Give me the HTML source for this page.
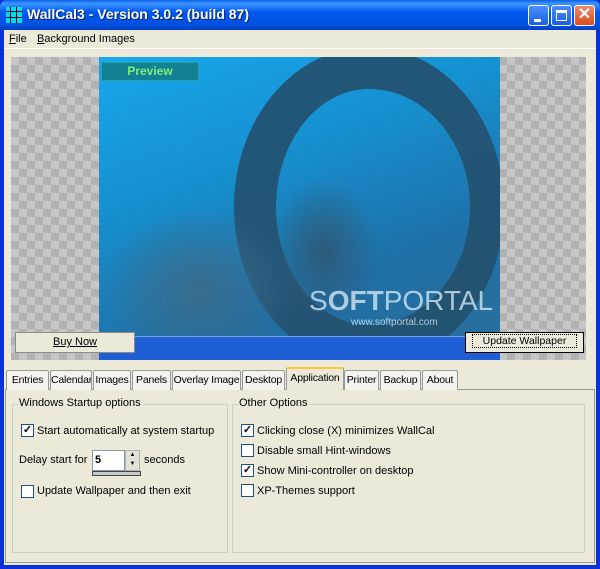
<!DOCTYPE html>
<html><head><style>
*{margin:0;padding:0;box-sizing:border-box}
body{width:600px;height:569px;overflow:hidden;background:#0831d9;font-family:"Liberation Sans",sans-serif;font-size:11px;color:#000;position:relative;white-space:nowrap}
.a{position:absolute}
#title{left:0;top:0;width:600px;height:30px;background:linear-gradient(#0a5fe8 0%,#3d95ff 12%,#0058ee 40%,#0050e0 85%,#003fbf 100%);border-radius:7px 7px 0 0}
#client{left:4px;top:30px;width:592px;height:535px;background:#ece9d8}
.cb{width:13px;height:13px;border:1px solid #1c5180;background:#fff;font-size:11px;line-height:11px;text-align:center;font-weight:bold}
.tab{top:370px;height:20px;border:1px solid #919b9c;border-bottom:none;background:#f4f3ee;line-height:18px;text-align:center;font-size:10.5px;letter-spacing:-0.2px;border-radius:2px 2px 0 0;overflow:hidden}
.gb{border:1px solid #d0d0bf;}
.lg{background:#ece9d8;padding:0 1px;font-size:11px}
</style></head><body>
<div id="title" class="a">
 <div class="a" style="left:6px;top:7px;width:16px;height:16px;background:
 linear-gradient(90deg,transparent 4px,#004 4px,#004 5px,transparent 5px,transparent 10px,#004 10px,#004 11px,transparent 11px),
 linear-gradient(transparent 4px,#004 4px,#004 5px,transparent 5px,transparent 10px,#004 10px,#004 11px,transparent 11px),#00e0e0"></div>
 <div class="a" style="left:27px;top:6px;color:#fff;font-weight:bold;font-size:14px;text-shadow:1px 1px #0a246a">WallCal3 - Version 3.0.2 (build 87)</div>
 <div class="a" style="left:528px;top:5px;width:21px;height:21px;border:1px solid #fff;border-radius:3px;background:linear-gradient(#4c8dff,#1a5ee8)"><div class="a" style="left:5px;top:13px;width:7px;height:3px;background:#fff"></div></div>
 <div class="a" style="left:551px;top:5px;width:21px;height:21px;border:1px solid #fff;border-radius:3px;background:linear-gradient(#4c8dff,#1a5ee8)"><div class="a" style="left:4px;top:4px;width:11px;height:11px;border:1px solid #fff;border-top-width:3px"></div></div>
 <div class="a" style="left:574px;top:5px;width:21px;height:21px;border:1px solid #fff;border-radius:3px;background:linear-gradient(#f08a6c,#d64a1e);color:#fff;font-weight:bold;font-size:16px;line-height:18px;text-align:center">✕</div>
</div>
<div id="client" class="a"></div>
<div class="a" style="left:9px;top:33px"><u>F</u>ile</div>
<div class="a" style="left:37px;top:33px"><u>B</u>ackground Images</div>
<div class="a" style="left:4px;top:48px;width:592px;height:1px;background:#fff"></div>
<div class="a" style="left:11px;top:57px;width:575px;height:303px;background-color:#c6c6c6;background-image:linear-gradient(45deg,#b2b2b2 25%,transparent 25%,transparent 75%,#b2b2b2 75%),linear-gradient(45deg,#b2b2b2 25%,transparent 25%,transparent 75%,#b2b2b2 75%);background-size:16px 16px;background-position:0 0,8px 8px"></div>
<div class="a" style="left:99px;top:57px;width:401px;height:303px;overflow:hidden;background:linear-gradient(160deg,#17a8ee 0%,#1690d0 35%,#1f6fa6 70%,#2a6f9a 100%)">
 <div class="a" style="left:135px;top:-10px;width:270px;height:320px;border-radius:50%;border:42px solid #24506e;border-right-width:34px;opacity:.9"></div>
 <div class="a" style="left:0;top:150px;width:200px;height:140px;background:radial-gradient(ellipse at 50% 60%,#3a6d8c,transparent 70%)"></div>
 <div class="a" style="left:170px;top:120px;width:110px;height:150px;background:radial-gradient(ellipse,#2e5a78,transparent 70%)"></div>
 <div class="a" style="left:210px;top:228px;color:#cfe6f3;font-size:28px;opacity:.8">S<b>OFT</b>PORTAL</div>
 <div class="a" style="left:252px;top:260px;color:#cfe6f3;font-size:10px;opacity:.8">www.softportal.com</div>
 <div class="a" style="left:0;top:279px;width:401px;height:24px;background:#1f5fd6;border-top:1px solid #6fa0e8"></div>
 <div class="a" style="left:2px;top:5px;width:98px;height:19px;background:#128191;border:1px solid #2aa0a8;color:#7df07d;font-weight:bold;font-size:12px;text-align:center;line-height:17px">Preview</div>
</div>
<div class="a" style="left:15px;top:332px;width:120px;height:21px;border:1px solid #8a8a8a;background:#ece9d8;text-align:center;line-height:19px"><u>Buy Now</u></div>
<div class="a" style="left:465px;top:332px;width:119px;height:21px;border:1px solid #000;background:#ece9d8;text-align:center;line-height:17px;font-size:10.5px"><span style="border:1px dotted #000;padding:0 10px">Update Wallpaper</span></div>
<div class="a" style="left:4px;top:360px;width:592px;height:8px;background:#ece9d8"></div>
<div class="a" style="left:5px;top:389px;width:590px;height:174px;border:1px solid #919b9c;background:#fcfcfe"></div>
<div class="a" style="left:6px;top:390px;width:588px;height:172px;background:#ece9d8"></div>
<div class="a tab" style="left:6px;width:43px">Entries</div>
<div class="a tab" style="left:50px;width:42px">Calendar</div>
<div class="a tab" style="left:93px;width:38px">Images</div>
<div class="a tab" style="left:132px;width:39px">Panels</div>
<div class="a tab" style="left:172px;width:69px">Overlay Image</div>
<div class="a tab" style="left:242px;width:43px">Desktop</div>
<div class="a tab" style="left:286px;top:367px;height:23px;width:58px;background:#ece9d8;border-top:2px solid #ffc83c">Application</div>
<div class="a tab" style="left:344px;width:35px">Printer</div>
<div class="a tab" style="left:380px;width:41px">Backup</div>
<div class="a tab" style="left:422px;width:36px">About</div>
<div class="a gb" style="left:12px;top:404px;width:216px;height:149px"></div>
<div class="a lg" style="left:18px;top:397px">Windows Startup options</div>
<div class="a gb" style="left:232px;top:404px;width:353px;height:149px"></div>
<div class="a lg" style="left:238px;top:397px">Other Options</div>
<div class="a cb" style="left:21px;top:424px">✓</div><div class="a" style="left:37px;top:425px">Start automatically at system startup</div>
<div class="a" style="left:19px;top:454px">Delay start for</div>
<div class="a" style="left:92px;top:450px;width:33px;height:21px;border:1px solid #7f9db9;background:#fff;font-weight:bold;padding:3px 2px">5</div>
<div class="a" style="left:125px;top:450px;width:15px;height:21px;border:1px solid #b0b0b0;background:#e4e2d6;font-size:6px;text-align:center;line-height:9px">▲<br>▼</div>
<div class="a" style="left:92px;top:471px;width:49px;height:5px;background:#c8c8c8;border:1px solid #444"></div>
<div class="a" style="left:144px;top:454px">seconds</div>
<div class="a cb" style="left:21px;top:485px"></div><div class="a" style="left:37px;top:485px">Update Wallpaper and then exit</div>
<div class="a cb" style="left:241px;top:424px">✓</div><div class="a" style="left:257px;top:425px">Clicking close (X) minimizes WallCal</div>
<div class="a cb" style="left:241px;top:444px"></div><div class="a" style="left:257px;top:445px">Disable small Hint-windows</div>
<div class="a cb" style="left:241px;top:464px">✓</div><div class="a" style="left:257px;top:465px">Show Mini-controller on desktop</div>
<div class="a cb" style="left:241px;top:484px"></div><div class="a" style="left:257px;top:485px">XP-Themes support</div>
</body></html>
